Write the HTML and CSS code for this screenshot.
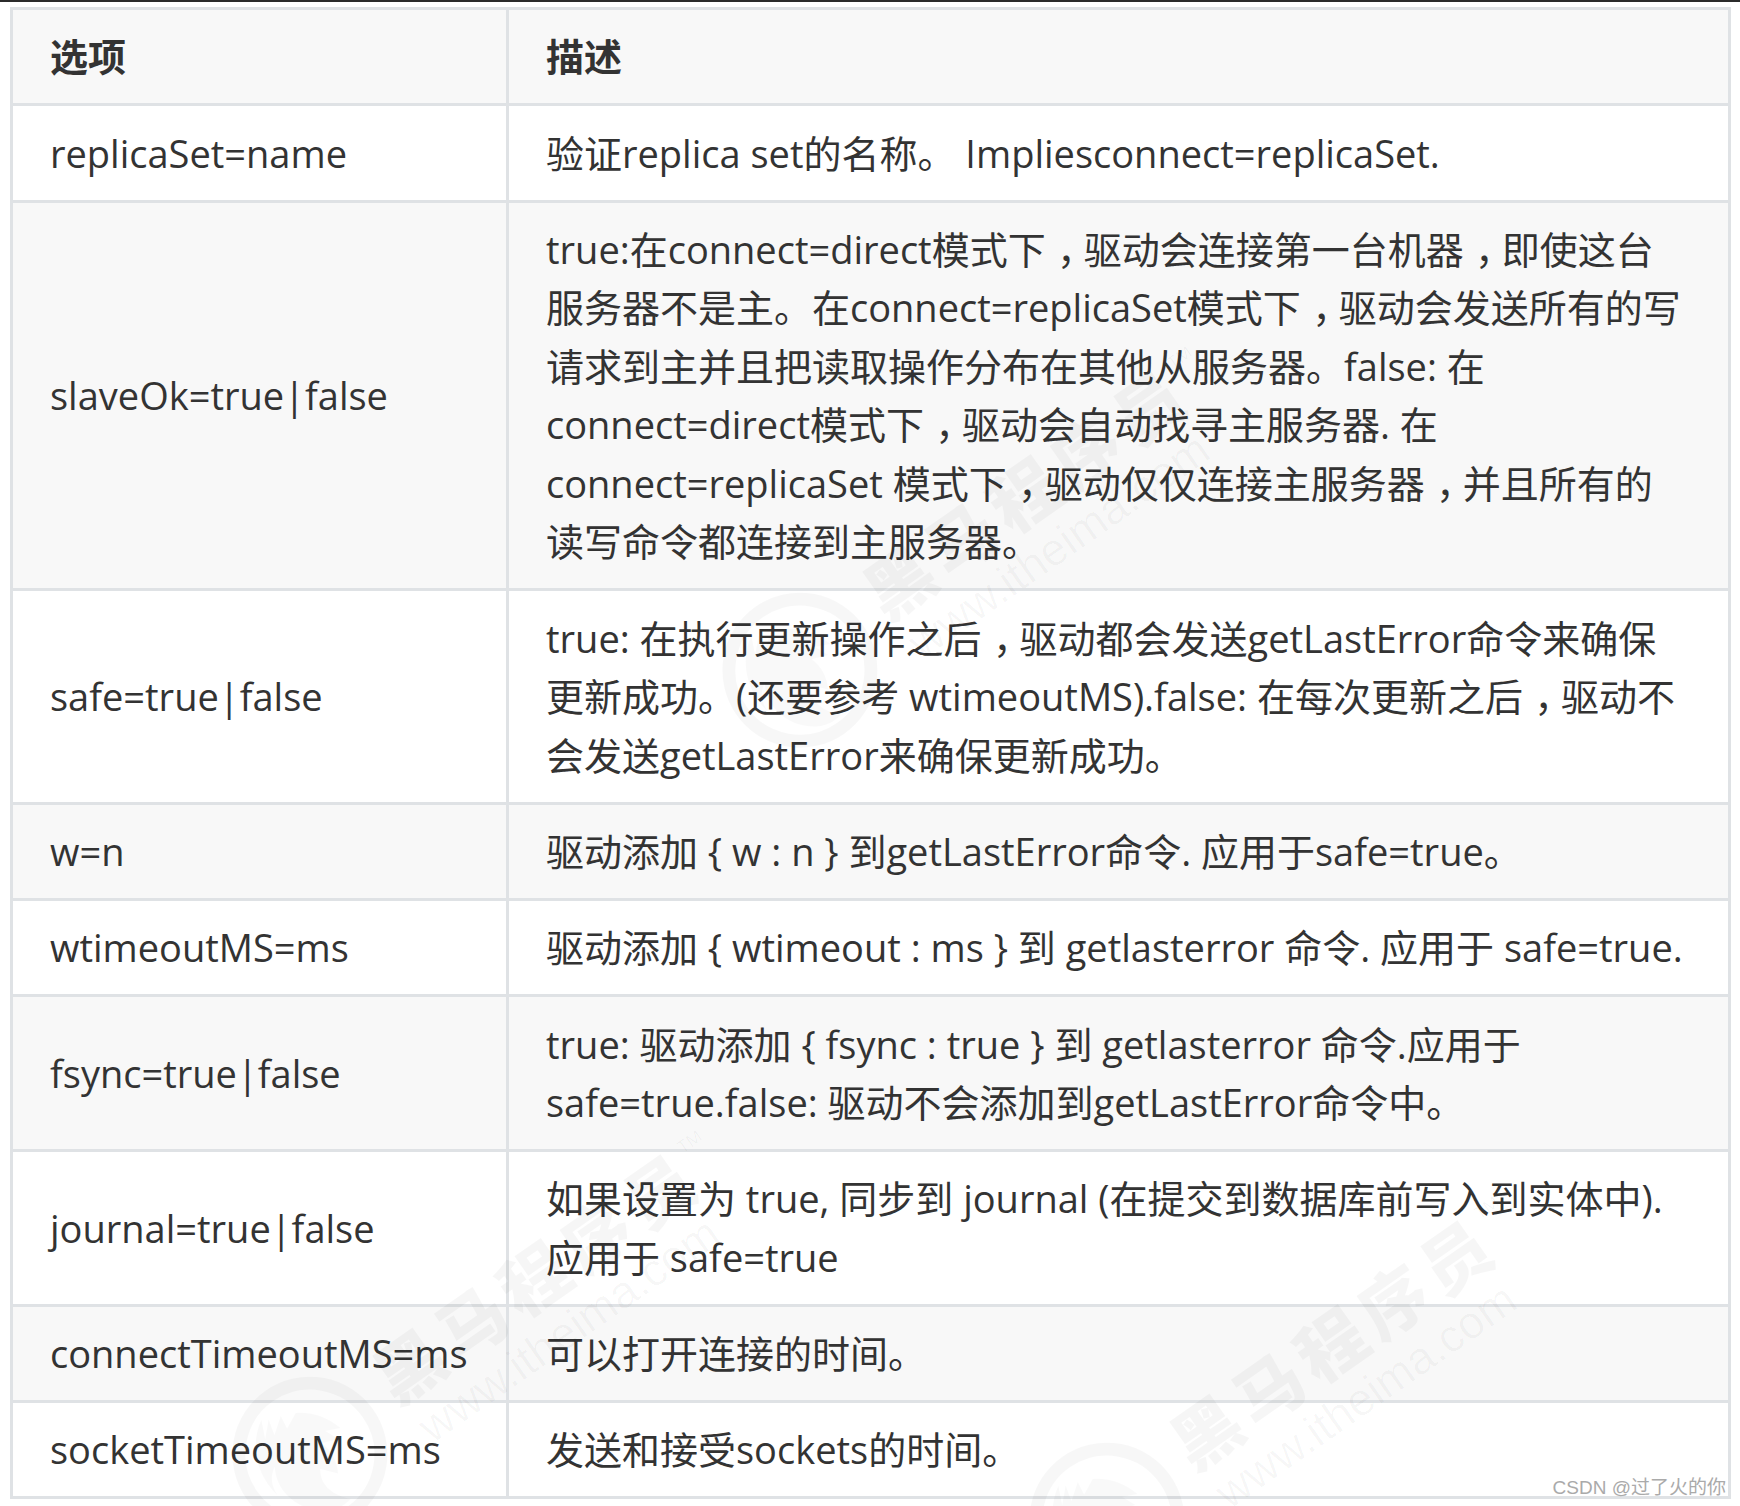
FILE: index.html
```html
<!DOCTYPE html>
<html lang="zh-CN">
<head>
<meta charset="utf-8">
<title>连接选项</title>
<link rel="stylesheet" href="styles.css">
</head>
<body>
<div class="page">
  <div class="topbar"></div>
  <table class="options">
    <colgroup><col class="col-name"><col class="col-desc"></colgroup>
    <thead>
      <tr><th>选项</th><th>描述</th></tr>
    </thead>
    <tbody>
      <tr><td>replicaSet=name</td><td>验证replica set的名称。 Impliesconnect=replicaSet.</td></tr>
      <tr><td>slaveOk=true|false</td><td>true:在connect=direct模式下<span class="comma">，</span>驱动会连接第一台机器<span class="comma">，</span>即使这台<br>服务器不是主。在connect=replicaSet模式下<span class="comma">，</span>驱动会发送所有的写<br>请求到主并且把读取操作分布在其他从服务器。false: 在<br>connect=direct模式下<span class="comma">，</span>驱动会自动找寻主服务器. 在<br>connect=replicaSet 模式下<span class="comma">，</span>驱动仅仅连接主服务器<span class="comma">，</span>并且所有的<br>读写命令都连接到主服务器。</td></tr>
      <tr><td>safe=true|false</td><td>true: 在执行更新操作之后<span class="comma">，</span>驱动都会发送getLastError命令来确保<br>更新成功。(还要参考 wtimeoutMS).false: 在每次更新之后<span class="comma">，</span>驱动不<br>会发送getLastError来确保更新成功。</td></tr>
      <tr><td>w=n</td><td>驱动添加 { w : n } 到getLastError命令. 应用于safe=true。</td></tr>
      <tr><td>wtimeoutMS=ms</td><td>驱动添加 { wtimeout : ms } 到 getlasterror 命令. 应用于 safe=true.</td></tr>
      <tr><td>fsync=true|false</td><td>true: 驱动添加 { fsync : true } 到 getlasterror 命令.应用于<br>safe=true.false: 驱动不会添加到getLastError命令中。</td></tr>
      <tr><td>journal=true|false</td><td>如果设置为 true, 同步到 journal (在提交到数据库前写入到实体中).<br>应用于 safe=true</td></tr>
      <tr><td>connectTimeoutMS=ms</td><td>可以打开连接的时间。</td></tr>
      <tr><td>socketTimeoutMS=ms</td><td>发送和接受sockets的时间。</td></tr>
    </tbody>
  </table>

  <svg class="watermarks" viewBox="0 0 1740 1506" aria-hidden="true">
    <defs>
      <g id="mark" transform="rotate(-35)">
        <circle class="wm-ring" cx="-132" cy="14" r="71"></circle>
        <path class="wm-fill" d="M-182 30c-6-30 6-58 30-72l-8 18 14-14-4 16 16-12-2 14 16-8c14 8 24 22 28 38l-14-6 6 14-16-6c4 12 2 24-4 34l-12-14c-10 14-4 30 8 42-24 6-46-16-50-38-2-12 0-22 6-32-10 6-14 14-14 26z"></path>
        <text class="wm-title" x="-34" y="25">黑马程序员</text>
        <text class="wm-tm" x="345" y="-18">TM</text>
        <text class="wm-url" x="-26" y="76">www.itheima.com</text>
      </g>
    </defs>
    <use href="#mark" x="0" y="0" transform="translate(900 583)"></use>
    <use href="#mark" x="0" y="0" transform="translate(410 1367)"></use>
    <use href="#mark" x="0" y="0" transform="translate(1207 1433)"></use>
  </svg>

  <div class="credit">CSDN @过了火的你</div>
</div>
</body>
</html>
```
FILE: styles.css
```css
* { box-sizing: border-box; }

html, body {
  margin: 0;
  background: #fff;
}

.page {
  position: relative;
  width: 1740px;
  height: 1506px;
  overflow: hidden;
  font-family: "Open Sans", "Noto Sans CJK SC", sans-serif;
  font-size: 38px;
  line-height: 58.5px;
  color: #333;
}

.topbar {
  height: 2px;
  margin-bottom: 5px;
  background: #2b2b2b;
}

.options {
  width: 1721px;
  margin-left: 10px;
  border-collapse: collapse;
  table-layout: fixed;
}

.col-name { width: 496px; }
.col-desc { width: 1222px; }

.options th,
.options td {
  padding: 17.4px 37px;
  border: 3px solid #dfe2e5;
  text-align: left;
  white-space: nowrap;
}

.options th { font-weight: 700; }

.options thead tr,
.options tbody tr:nth-child(even) { background: #f8f8f8; }

/* half-width comma glyph, padded back to a full em so it sits mid-cell */
.comma {
  font-feature-settings: "halt";
  padding-left: 0.3em;
  padding-right: 0.2em;
}

.watermarks {
  position: absolute;
  left: 0;
  top: 0;
  width: 1740px;
  height: 1506px;
  pointer-events: none;
}

.wm-ring {
  fill: none;
  stroke: rgba(0, 0, 0, 0.03);
  stroke-width: 13;
}

.wm-fill { fill: rgba(0, 0, 0, 0.025); }

.wm-title {
  fill: rgba(0, 0, 0, 0.035);
  font-family: "Noto Sans CJK SC", sans-serif;
  font-size: 68px;
  font-weight: 900;
  letter-spacing: 8px;
}

.wm-url {
  fill: rgba(0, 0, 0, 0.03);
  font-family: "Liberation Sans", sans-serif;
  font-size: 45.6px;
}

.wm-tm {
  fill: rgba(0, 0, 0, 0.035);
  font-family: "Liberation Sans", sans-serif;
  font-size: 18px;
}

.credit {
  position: absolute;
  right: 14px;
  bottom: 7px;
  font-family: "Liberation Sans", "Noto Sans CJK SC", sans-serif;
  font-size: 19px;
  line-height: 22px;
  color: #aaa;
  white-space: nowrap;
}
```
